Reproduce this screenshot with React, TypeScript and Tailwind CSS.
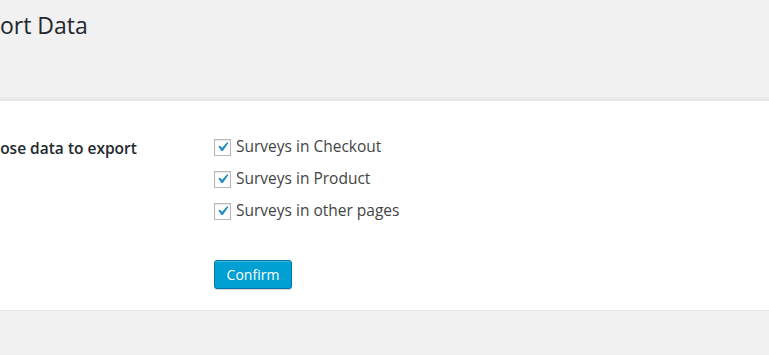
import React from "react";

const options = ["Surveys in Checkout", "Surveys in Product", "Surveys in other pages"];

const CheckIcon = () => (
  <svg viewBox="0 0 20 20" className="w-[20px] h-[20px] -m-[2px]">
    <path d="M14.83 4.89l1.34.94-5.81 8.38H9.02L5.78 9.67l1.34-1.25 2.57 2.4z" fill="#1e8cbe" />
  </svg>
);

const App = () => {
  return (
    <div
      className="w-full h-[355px] bg-[#f1f1f1] overflow-hidden text-[#444]"
      style={{ fontFamily: '"Open Sans", "Noto Sans", sans-serif' }}
    >
      <h1 className="-ml-[39px] pt-[11px] text-[23px] leading-[29px] font-normal text-[#23282d] whitespace-nowrap">
        Export Data
      </h1>
      <div className="mt-[60px] h-[211px] bg-white border-y border-[#e5e5e5] shadow-[0_-3px_0_#eaeaea]">
        <div className="flex pt-[28px]">
          <div className="-ml-[29px] w-[243px] shrink-0 pt-[8px] text-[15.5px] font-semibold text-[#23282d] whitespace-nowrap">
            Choose data to export
          </div>
          <div className="flex flex-col pt-[2px]">
            {options.map((label) => (
              <label key={label} className="flex items-center h-[32px] text-[15.5px]">
                <span className="w-[17px] h-[17px] border border-[#b4b9be] bg-white shadow-[inset_0_1px_2px_rgba(0,0,0,0.1)] flex items-center justify-center">
                  <CheckIcon />
                </span>
                <span className="ml-[5px]">{label}</span>
              </label>
            ))}
            <button className="mt-[33px] w-[78px] h-[29px] rounded-[3px] bg-[#00a0d2] border border-[#0073aa] text-white text-[14px] shadow-[inset_0_1px_0_rgba(120,200,230,0.5),0_1px_0_rgba(0,0,0,0.15)]">
              Confirm
            </button>
          </div>
        </div>
      </div>
    </div>
  );
};

export default App;
